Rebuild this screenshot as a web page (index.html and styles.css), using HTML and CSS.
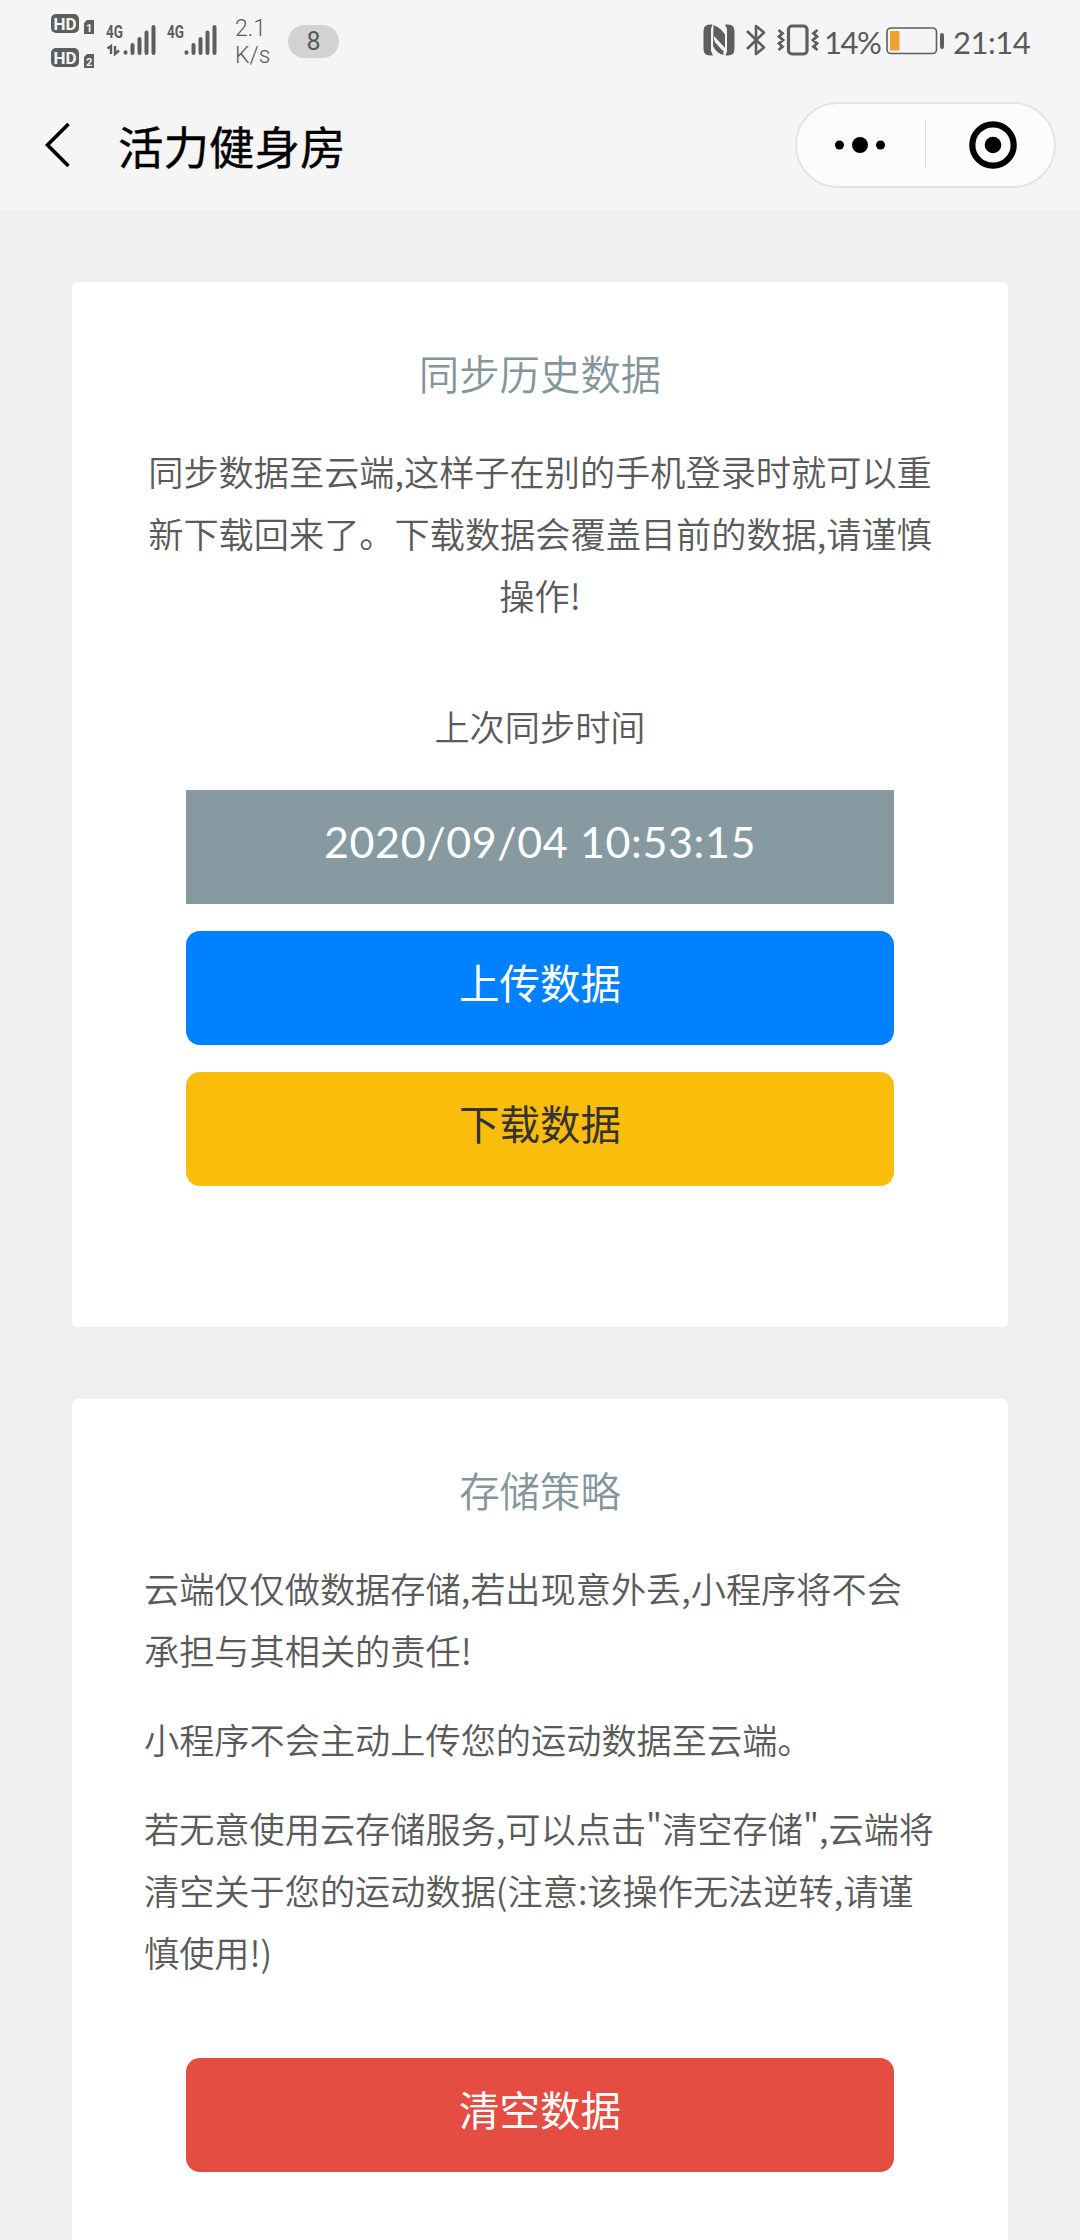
FILE: index.html
```html
<!DOCTYPE html>
<html lang="zh-CN">
<head>
    <meta charset="UTF-8">
    <meta name="viewport" content="width=device-width, initial-scale=1.0">
    <title>活力健身房</title>
    <link rel="stylesheet" href="styles.css">
</head>
<body>
    <header>
        <div class="status-bar">
            <div class="status-left">
                <svg class="icon-hd" width="46" height="58" viewBox="0 0 46 58">
                    <rect x="1" y="1" width="28" height="19" rx="5" fill="#5e5e5e"/>
                    <text class="hd-text" x="15" y="16.5">HD</text>
                    <path d="M34 10l3-3h7v14H34z" fill="#5e5e5e"/>
                    <text class="sim-text" x="39.2" y="18.5">1</text>
                    <rect x="1" y="35" width="28" height="19" rx="5" fill="#5e5e5e"/>
                    <text class="hd-text" x="15" y="50.5">HD</text>
                    <path d="M34 44l3-3h7v14H34z" fill="#5e5e5e"/>
                    <text class="sim-text" x="39.2" y="52.5">2</text>
                </svg>
                <svg class="icon-signal" width="50" height="40" viewBox="0 -8 50 40">
                    <text class="net-text" x="0" y="14" textLength="17" lengthAdjust="spacingAndGlyphs">4G</text>
                    <path d="M1.500 24.500l3.500-2.500v8M9 22v8l4-3.500" fill="none" stroke="#5e5e5e" stroke-width="2.400"/>
                    <path d="M19.500 28.300v.5M26.500 21v8M33.500 15v14M40.500 8.500v20.500M47.500 3v26" fill="none" stroke="#5e5e5e" stroke-width="4" stroke-linecap="round"/>
                </svg>
                <svg class="icon-signal" width="50" height="40" viewBox="0 -8 50 40">
                    <text class="net-text" x="0" y="14" textLength="17" lengthAdjust="spacingAndGlyphs">4G</text>
                    <path d="M19.500 28.300v.5M26.500 21v8M33.500 15v14M40.500 8.500v20.500M47.500 3v26" fill="none" stroke="#5e5e5e" stroke-width="4" stroke-linecap="round"/>
                </svg>
                <div class="speed">2.1<br>K/s</div>
                <div class="count">8</div>
            </div>
            <div class="status-right">
                <svg class="icon-nfc" width="32" height="32" viewBox="0 0 32 32">
                    <path d="M7 0.500h2.500L8 5v22l2 4.500H7q-6.500 0-6.500-6.500V7Q.5.5 7 .5z" fill="#5e5e5e"/>
                    <path d="M25 31.500h-2.500L24 27V5l-2-4.500h3q6.500 0 6.500 6.500v18q0 6.500-6.500 6.500z" fill="#5e5e5e"/>
                    <path d="M10.500 1q7.500 3 11.500 9.500V24L11 12v4l9.500 10.500V31Q13 29 10 22z" fill="#5e5e5e"/>
                    <path d="M12 17l8 9" stroke="#f5f5f5" stroke-width="1.500"/>
                </svg>
                <svg class="icon-bt" width="22" height="32" viewBox="0 0 22 32">
                    <path d="M2 7l17 16.500L11 30V2l8 6.500L2 25" fill="none" stroke="#5e5e5e" stroke-width="2.600" stroke-linejoin="round"/>
                </svg>
                <svg class="icon-vibrate" width="42" height="32" viewBox="0 0 42 32">
                    <rect x="11.500" y="2" width="18.500" height="28" rx="3.500" fill="none" stroke="#5e5e5e" stroke-width="3.200"/>
                    <path d="M1.500 6l4 3.300-3.500 3.300 4 3.400-4 3.400 3.500 3.300-4 3.300M40.500 6l-4 3.300 3.500 3.300-4 3.400 4 3.400-3.500 3.300 4 3.300" fill="none" stroke="#5e5e5e" stroke-width="2.800"/>
                </svg>
                <span class="percent">14%</span>
                <svg class="icon-battery" width="60" height="28" viewBox="0 0 60 28">
                    <rect x="1" y="1" width="49.500" height="25.500" rx="4" fill="none" stroke="#5e5e5e" stroke-width="1.600"/>
                    <rect x="4" y="4" width="9.500" height="19.500" rx="1" fill="#f0a12c"/>
                    <rect x="54" y="6" width="4" height="16" rx="2" fill="#5e5e5e"/>
                </svg>
                <span class="clock">21:14</span>
            </div>
        </div>
        <div class="nav">
            <svg class="back" width="26" height="46" viewBox="0 0 26 46">
                <path d="M24.500 2L3.500 23l21 21" fill="none" stroke="#000" stroke-width="3.600"/>
            </svg>
            <div class="nav-title">活力健身房</div>
            <div class="capsule">
                <svg class="more" width="52" height="18" viewBox="0 0 52 18">
                    <circle cx="5.500" cy="9" r="4.500"/>
                    <circle cx="26" cy="9" r="8"/>
                    <circle cx="46.500" cy="9" r="4.500"/>
                </svg>
                <span class="divider"></span>
                <svg class="close" width="48" height="48" viewBox="0 0 48 48">
                    <circle cx="24" cy="24" r="20.700" fill="none" stroke="#000" stroke-width="6.200"/>
                    <circle cx="24" cy="24" r="8.300"/>
                </svg>
            </div>
        </div>
    </header>

    <main>
        <section class="card card-sync">
            <h2>同步历史数据</h2>
            <p class="center">同步数据至云端,这样子在别的手机登录时就可以重<br>新下载回来了。下载数据会覆盖目前的数据,请谨慎<br>操作!</p>
            <p class="center last-label">上次同步时间</p>
            <div class="buttons">
                <div class="last-time">2020/09/04 10:53:15</div>
                <button class="btn-upload">上传数据</button>
                <button class="btn-download">下载数据</button>
            </div>
        </section>

        <section class="card card-policy">
            <h2>存储策略</h2>
            <p>云端仅仅做数据存储,若出现意外丢,小程序将不会<br>承担与其相关的责任!</p>
            <p>小程序不会主动上传您的运动数据至云端。</p>
            <p>若无意使用云存储服务,可以点击"清空存储",云端将<br>清空关于您的运动数据(注意:该操作无法逆转,请谨<br>慎使用!)</p>
            <div class="buttons">
                <button class="btn-clear">清空数据</button>
            </div>
        </section>
    </main>
</body>
</html>
```
FILE: styles.css
```css
* {
    box-sizing: border-box;
}

body {
    margin: 0;
    background-color: #efefef;
    font-family: "Noto Sans CJK SC", sans-serif;
    font-weight: 350;
    color: #5a5a5a;
}

header {
    height: 211px;
    background-color: #f5f5f5;
}

svg {
    display: block;
    flex-shrink: 0;
}

/* barra de estado */
.status-bar {
    display: flex;
    justify-content: space-between;
    height: 84px;
    padding: 0 50px 0 50px;
}

.status-left,
.status-right {
    display: flex;
    align-items: flex-start;
}

.icon-hd {
    margin-top: 13px;
}

.icon-signal {
    margin: 16px 0 0 10px;
}

.icon-signal + .icon-signal {
    margin-left: 11px;
}

.hd-text {
    font: bold 17px "Roboto", sans-serif;
    fill: #f5f5f5;
    text-anchor: middle;
}

.sim-text {
    font: bold 11px "Roboto", sans-serif;
    fill: #f5f5f5;
    text-anchor: middle;
}

.net-text {
    font: bold 18px "Roboto", sans-serif;
    fill: #5e5e5e;
}

.speed {
    width: 36px;
    margin: 15px 0 0 18px;
    font: 300 23px/27px "Roboto", sans-serif;
    white-space: nowrap;
}

.count {
    width: 51px;
    height: 33px;
    margin: 25px 0 0 17px;
    border-radius: 17px;
    background-color: #d2d2d2;
    font: 400 25px/34px "Roboto", sans-serif;
    text-align: center;
}

.icon-nfc {
    margin-top: 24px;
}

.icon-bt {
    margin: 24px 0 0 10px;
}

.icon-vibrate {
    margin: 24px 0 0 10px;
}

.percent,
.clock {
    margin-top: 22px;
    font: 400 31px/40px "Lato", sans-serif;
    white-space: nowrap;
}

.percent {
    width: 54px;
    margin-left: 5px;
    letter-spacing: -1.5px;
}

.icon-battery {
    margin: 27px 0 0 8px;
}

.clock {
    width: 77px;
    margin-left: 7px;
    letter-spacing: -0.5px;
}

/* barra de navegación */
.nav {
    display: flex;
    align-items: center;
    height: 122px;
    padding: 0 24px 0 44px;
}

.nav-title {
    flex: 1;
    margin-left: 48px;
    font-size: 45.5px;
    font-weight: 400;
    line-height: 60px;
    color: #000;
    -webkit-text-stroke: 0.4px #000;
}

.capsule {
    display: flex;
    align-items: center;
    width: 261px;
    height: 86px;
    border: 2px solid #e4e4e4;
    border-radius: 43px;
    background-color: #fcfcfc;
}

.more {
    margin-left: 37px;
}

.divider {
    width: 1px;
    height: 48px;
    margin-left: 39px;
    background-color: #dcdcdc;
}

.close {
    margin-left: 43px;
}

/* tarjetas */
main {
    padding: 71px 72px 0;
}

.card {
    padding: 61px 72px 0;
    border-radius: 6px;
    background-color: #fff;
}

.card-sync {
    height: 1045px;
    margin-bottom: 72px;
}

.card-policy {
    height: 841px;
    border-radius: 6px 6px 0 0;
}

h2 {
    margin: 0 0 37px;
    font-size: 40.4px;
    font-weight: 350;
    line-height: 60px;
    text-align: center;
    color: #84959c;
}

p {
    margin: 0 0 27px;
    font-size: 35.2px;
    line-height: 62px;
    white-space: nowrap;
}

.center {
    text-align: center;
}

.last-label {
    margin: 69px 0 33px;
}

.buttons {
    display: flex;
    flex-direction: column;
    gap: 27px;
    padding: 0 42px;
}

.card-policy .buttons {
    margin-top: 75px;
}

.last-time,
button {
    height: 114px;
    padding: 0 0 12px;
    border: none;
    text-align: center;
    color: #fff;
}

.last-time {
    background-color: #8799a1;
    font: 400 43px/104px "Lato", sans-serif;
    letter-spacing: 0.6px;
}

button {
    border-radius: 14px;
    font-family: inherit;
    font-size: 40.5px;
    font-weight: 400;
    line-height: 102px;
}

.btn-upload {
    background-color: #0081ff;
}

.btn-download {
    background-color: #fabd0b;
    color: #333;
}

.btn-clear {
    background-color: #e54d42;
}
```
